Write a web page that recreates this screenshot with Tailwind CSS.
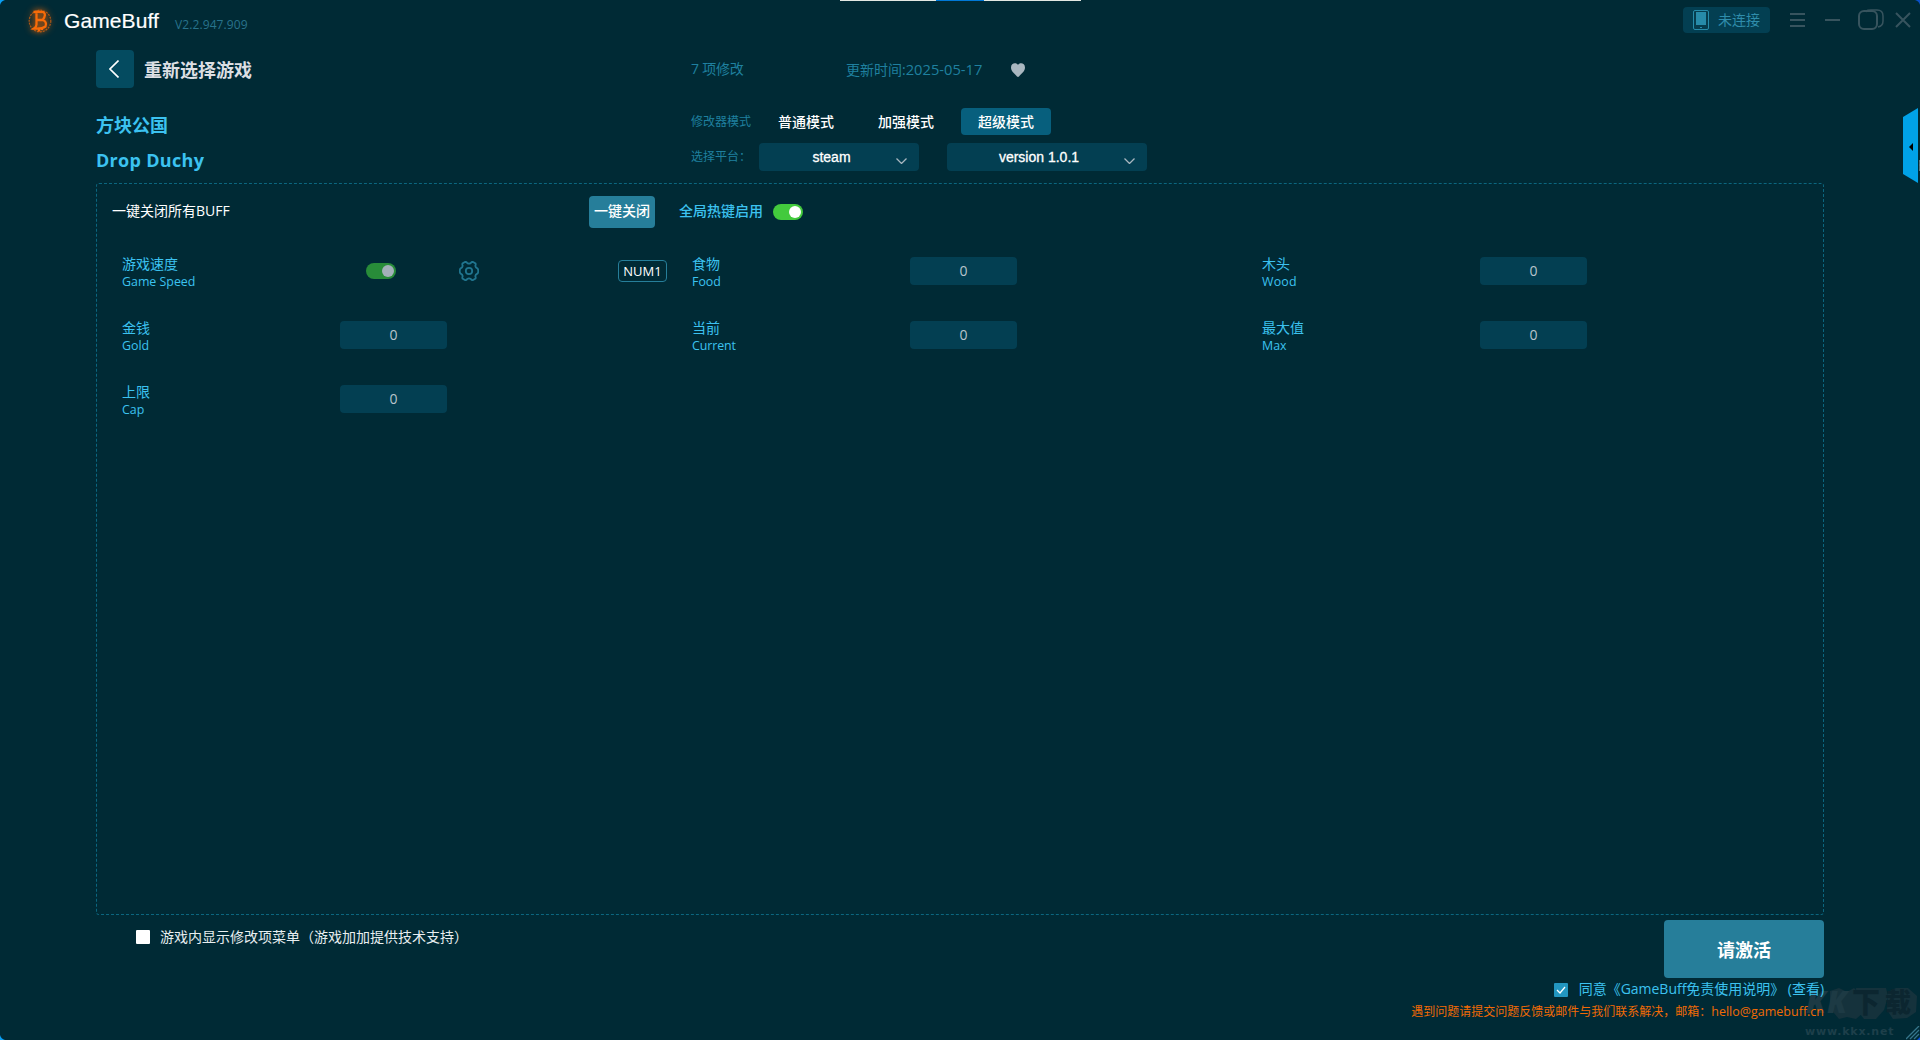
<!DOCTYPE html>
<html lang="zh-CN">
<head>
<meta charset="utf-8">
<title>GameBuff</title>
<script src="https://cdn.jsdelivr.net/npm/@tailwindcss/browser@4"></script>
</head>
<body class="overflow-hidden bg-[#002a35]">
<div class="relative flex h-[1040px] w-[1920px] flex-col overflow-hidden bg-[#002a35] font-['Open_Sans','Noto_Sans_CJK_SC',sans-serif] text-sm leading-5 text-[#3cc2f0]">

  <!-- title bar -->
  <header class="flex h-[41px] items-center pl-7">
    <svg class="size-6 overflow-visible drop-shadow-[0_0_3px_#ff6a00]" viewBox="0 0 24 24" fill="none" stroke="#f86b08">
      <circle cx="12" cy="12" r="10.800" stroke-width="1.200" stroke-dasharray="2 1" opacity=".65"/>
      <path d="M5.500 3q5-.6 10 .2 3.200 1.800-.8 7.800 4.500 1.500 2.800 6.500Q14 20 6 19.500q2.500-1.500 2.500-4V4M9 11h5.500M11 19v3.500M14 19v2" stroke-width="2.300"/>
    </svg>
    <h1 class="ml-[12px] w-[111px] pt-px font-['Liberation_Sans'] text-[21px] leading-6 tracking-[0.100px] text-white [-webkit-text-stroke:0.2px_white]">GameBuff</h1>
    <span class="mt-[8px] text-xs tracking-[0.100px] text-[#28738c]">V2.2.947.909</span>
    <div class="mb-px ml-auto flex h-[26px] w-[87px] items-center rounded-[4px] bg-[#033f52] pl-2.5 text-[#2f8dab]">
      <svg class="mr-[9px] h-5 w-4" viewBox="0 0 16 20"><rect x=".5" y=".5" width="15" height="19" rx="1.500" fill="#063d4e" stroke="#278ba9"/><path fill="#278ba9" d="M3 2h10v13H3zM7 17h2v1H7z"/></svg>
      <span>未连接</span>
    </div>
    <svg class="mb-px ml-5 h-6 w-[130px]" viewBox="0 0 130 24" fill="none" stroke="#37545e" stroke-width="2">
      <path d="M0 6h15M0 12h15M0 18h15M35 12h15"/>
      <rect x="69" y="3" width="18" height="18" rx="5"/>
      <path d="M76 4c1-2 2-2 5-2h6q6 0 6 6v5q0 5-5 6" stroke-width="1.500"/>
      <path d="m106 5 14 14M120 5l-14 14"/>
    </svg>
  </header>

  <main class="mx-24 flex h-[874px] flex-col">
    <section class="grid h-[142px] grid-cols-[595px_1fr]">
      <div class="pt-[9px]">
        <div class="flex h-[38px] items-center gap-[10px]">
          <button class="grid size-[38px] place-items-center rounded-[4px] bg-[#044b60]">
            <svg class="mr-0.5 h-[18px] w-2.5" viewBox="0 0 10 18" fill="none" stroke="#fff" stroke-width="1.600"><path d="M9.500.5 1 9l8.500 8.500"/></svg>
          </button>
          <span class="pt-px text-lg font-bold text-[#dcdfe3]">重新选择游戏</span>
        </div>
        <h2 class="mt-[25px] text-lg leading-6 font-bold">方块公国</h2>
        <h2 class="mt-[11px] text-lg leading-6 font-bold tracking-[0.300px]">Drop Duchy</h2>
      </div>
      <div class="pt-[18px] text-[#1f809f]">
        <div class="flex h-5 items-center">
          <span class="w-[155px] tracking-[-0.200px]">7 项修改</span>
          <span class="w-[165px] whitespace-nowrap">更新时间:<span class="text-[14.700px]">2025-05-17</span></span>
          <svg class="mt-0.5 h-3.5 w-3.5" viewBox="0 0 14 14" fill="#a9b7c0"><path d="M7 2C6-.5 0-.8 0 4.500 0 8.500 4 11 6 13.500q1 .8 2 0C10 11 14 8.500 14 4.500 14-.8 8-.5 7 2z"/></svg>
        </div>
        <div class="mt-[29px] flex h-[27px] items-center gap-2.5 font-medium text-white">
          <span class="w-[60px] text-xs font-normal text-[#1f809f]">修改器模式</span>
          <button class="h-full w-[90px]">普通模式</button>
          <button class="h-full w-[90px]">加强模式</button>
          <button class="h-full w-[90px] rounded-[4px] bg-[#075f7d]">超级模式</button>
        </div>
        <div class="mt-2 flex h-7 items-center">
          <span class="w-[68px] text-xs">选择平台：</span>
          <div class="flex h-full w-40 items-center rounded-[4px] bg-[#033f52] pr-3 font-['Liberation_Sans'] text-sm text-white [-webkit-text-stroke:0.3px_white]">
            <span class="flex-1 pl-2 text-center">steam</span>
            <svg class="mt-2 h-1.5 w-[11px]" viewBox="0 0 11 6" fill="none" stroke="#a9b7c0" stroke-width="1.300"><path d="m.5.5 5 5 5-5"/></svg>
          </div>
          <div class="ml-7 flex h-full w-50 items-center rounded-[4px] bg-[#033f52] pr-3 font-['Liberation_Sans'] text-sm text-white [-webkit-text-stroke:0.3px_white]">
            <span class="flex-1 pl-[7px] text-center">version 1.0.1</span>
            <svg class="mt-2 h-1.5 w-[11px]" viewBox="0 0 11 6" fill="none" stroke="#a9b7c0" stroke-width="1.300"><path d="m.5.5 5 5 5-5"/></svg>
          </div>
        </div>
      </div>
    </section>

    <section class="h-[733px] rounded-[3px] border border-dashed border-[#0b667f]">
      <div class="mt-3 flex h-8 items-center pl-[15px]">
        <span class="w-[477px] pb-px text-white">一键关闭所有BUFF</span>
        <button class="h-8 w-[66px] rounded-[4px] bg-[#267e9a] pb-px font-medium text-white">一键关闭</button>
        <span class="ml-6 w-[94px] pb-px font-medium">全局热键启用</span>
        <span class="flex h-4 w-[30px] items-center justify-end rounded-full bg-[#43ca3d] pr-0.5"><i class="size-3 rounded-full bg-white"></i></span>
      </div>
      <div class="mt-[11px] grid auto-rows-[64px] grid-cols-[570px_570px_1fr] pl-[25px]">
        <div class="flex items-center">
          <div class="w-[244px] pt-[4px] leading-[18px]"><p>游戏速度</p><p class="text-[12.400px]">Game Speed</p></div>
          <span class="flex h-4 w-[30px] items-center justify-end rounded-full bg-[#288c39] pr-0.5"><i class="size-3 rounded-full bg-[#a3b0b9]"></i></span>
          <svg class="ml-[63px] size-5" viewBox="0 0 20 20" fill="none" stroke="#20758f" stroke-width="1.800"><path d="M6.300.8Q7.500.8 8.200 2 10 3.300 11.800 2 12.500.8 13.700.8L16.500 2.400Q17 3.300 16.300 4.800 16.500 6.600 18.300 7.300 19.200 8 19.300 10 19.200 12 18.300 12.700 16.500 13.400 16.300 15.200 17 16.700 16.500 17.600L13.700 19.200Q12.500 19.200 11.800 18 10 16.700 8.200 18 7.500 19.200 6.300 19.200L3.500 17.600Q3 16.700 3.700 15.200 3.500 13.400 1.700 12.700.8 12 .7 10 .8 8 1.700 7.300 3.500 6.600 3.700 4.800 3 3.300 3.500 2.400z"/><circle cx="10" cy="10" r="3.200"/></svg>
          <span class="ml-[139px] h-[22px] w-[49px] rounded-[4px] border border-[#267e9a] text-center text-[13px] font-medium text-white">NUM1</span>
        </div>
        <div class="flex items-center">
          <div class="w-[218px] pt-[4px] leading-[18px]"><p>食物</p><p class="text-[12.400px]">Food</p></div>
          <span class="grid h-7 w-[107px] place-items-center rounded-[4px] bg-[#033f52] text-[#b9c4cc]">0</span>
        </div>
        <div class="flex items-center">
          <div class="w-[218px] pt-[4px] leading-[18px]"><p>木头</p><p class="text-[12.400px] tracking-[0.200px]">Wood</p></div>
          <span class="grid h-7 w-[107px] place-items-center rounded-[4px] bg-[#033f52] text-[#b9c4cc]">0</span>
        </div>
        <div class="flex items-center">
          <div class="w-[218px] pt-[4px] leading-[18px]"><p>金钱</p><p class="text-[12.400px]">Gold</p></div>
          <span class="grid h-7 w-[107px] place-items-center rounded-[4px] bg-[#033f52] text-[#b9c4cc]">0</span>
        </div>
        <div class="flex items-center">
          <div class="w-[218px] pt-[4px] leading-[18px]"><p>当前</p><p class="text-[12.400px] tracking-[-0.100px]">Current</p></div>
          <span class="grid h-7 w-[107px] place-items-center rounded-[4px] bg-[#033f52] text-[#b9c4cc]">0</span>
        </div>
        <div class="flex items-center">
          <div class="w-[218px] pt-[4px] leading-[18px]"><p>最大值</p><p class="text-[12.400px]">Max</p></div>
          <span class="grid h-7 w-[107px] place-items-center rounded-[4px] bg-[#033f52] text-[#b9c4cc]">0</span>
        </div>
        <div class="flex items-center">
          <div class="w-[218px] pt-[4px] leading-[18px]"><p>上限</p><p class="text-[12.400px]">Cap</p></div>
          <span class="grid h-7 w-[107px] place-items-center rounded-[4px] bg-[#033f52] text-[#b9c4cc]">0</span>
        </div>
      </div>
    </section>
  </main>

  <footer class="relative z-10 mx-24 flex justify-between pt-[5px]">
    <label class="mt-[7px] ml-10 flex h-5 items-center gap-2.5 text-[#e8eef0]"><i class="size-3.5 rounded-[1px] bg-white"></i>游戏内显示修改项菜单（游戏加加提供技术支持）</label>
    <div class="flex flex-col items-end">
      <button class="h-[58px] w-40 rounded-[4px] bg-[#267e9a] pt-0.5 text-lg font-bold text-white">请激活</button>
      <label class="mt-px flex h-5 items-center">
        <svg class="mt-0.5 mr-[11px] size-3.5" viewBox="0 0 14 14"><rect width="14" height="14" rx="1" fill="#2296c0"/><path d="m3 7 3 3 5-6" fill="none" stroke="#fff" stroke-width="1.300"/></svg>
        <span class="tracking-[-0.020px]">同意《GameBuff免责使用说明》 (查看)</span>
      </label>
      <p class="mt-[3px] text-xs leading-5 text-[#f26b05]">遇到问题请提交问题反馈或邮件与我们联系解决，邮箱：<span class="text-[12.500px]">hello@gamebuff.cn</span></p>
    </div>
  </footer>

  <!-- overlays on the window edge -->
  <div class="absolute top-0 left-[840px] flex h-px w-[241px] bg-[#e3e8e3]"><i class="ml-24 w-12 bg-[#0078d7]"></i></div>
  <svg class="absolute top-[108px] left-[1903px] h-[75px] w-[17px]" viewBox="0 0 17 75"><path fill="#00a2e8" d="M0 9 15 0v75L0 66z"/><path d="M10 35v8l-4-4z"/><path d="M16 53h1M16 57h1M16 62h1M16.500 52v11" stroke="#6b7f86" stroke-width=".8"/></svg>
  <svg class="absolute top-[986px] left-[1804px] h-[34px] w-[114px]" viewBox="0 0 114 34">
    <path fill="#15323c" d="M26 5l9-3 8 4 7-4 7 7-3 7 6 10-8 7-9-2-8 2-5-6-4-12zM52 2h30l2 8-4 14-8 9H60l-7-9zM84 6l8-4h12l9 8-1 16-9 6-14 1-6-9z"/>
  </svg>
  <div class="absolute top-[982px] left-[1806px] flex font-black whitespace-nowrap text-[#1d3a44] italic">
    <span class="w-[46px] text-[30px] leading-10 tracking-[1px]">KK</span><span class="w-[33px] text-[28px] leading-10 text-[#0c2630] not-italic">下</span><span class="text-[26px] leading-10 text-[#0c2630] not-italic">载</span>
  </div>
  <div class="absolute top-[1024px] left-[1805px] font-['DejaVu_Sans'] text-[11px] leading-4 font-bold tracking-[0.800px] text-[#1d3f4a]">www.kkx.net</div>
  <svg class="absolute top-[1026px] left-[1906px] size-3.5" viewBox="0 0 14 14" stroke="#35758a" stroke-width="1.300"><path d="M0 13 13 0M4 13l9-9M8 13l5-5"/></svg>
  <!-- desktop showing behind the rounded window corners -->
  <svg class="absolute top-0 left-0 size-[5px]" viewBox="0 0 5 5"><path fill="#0aa0f5" d="M0 0h5Q1 1 0 5z"/></svg>
  <svg class="absolute top-0 right-0 size-[5px]" viewBox="0 0 5 5"><path fill="#0a50c8" d="M5 0v5Q4 1 0 0z"/></svg>
  <svg class="absolute bottom-0 left-0 size-[5px]" viewBox="0 0 5 5"><path fill="#0aa0f5" d="M0 0v5h5Q1 4 0 0z"/></svg>
  <svg class="absolute right-0 bottom-0 size-[3px]" viewBox="0 0 3 3"><path fill="#0a50d8" d="M3 0v3H0z"/></svg>
</div>
</body>
</html>
